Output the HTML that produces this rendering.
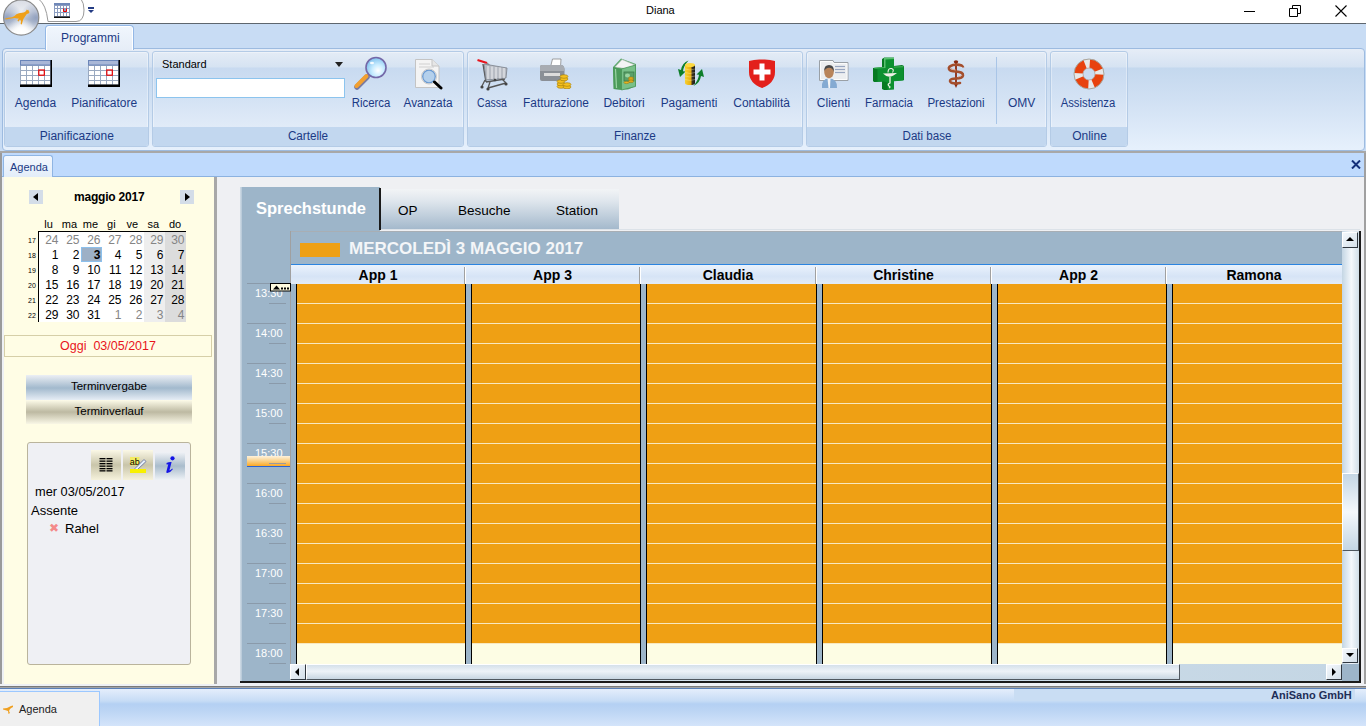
<!DOCTYPE html>
<html><head><meta charset="utf-8">
<style>
*{box-sizing:border-box;margin:0;padding:0}
html,body{width:1366px;height:726px;overflow:hidden;background:#fff;font-family:"Liberation Sans",sans-serif;position:relative}
.a{position:absolute}
.t{position:absolute;white-space:nowrap;line-height:1}
.rl{position:absolute;white-space:nowrap;line-height:1;font-size:12px;color:#1b3a85;top:97px;transform:translateX(-50%)}
.gl{position:absolute;white-space:nowrap;line-height:1;font-size:12px;color:#1b3a85;top:130px;transform:translateX(-50%)}
.grp{position:absolute;top:51px;height:96px;border:1px solid #b4cbe6;border-radius:3px;background:linear-gradient(#e4ecf6,#d6e3f2 15px,#c8daf0 16px,#d3e2f4 45px,#e1ebf8 75px);overflow:hidden;box-shadow:inset 0 0 0 1px rgba(255,255,255,0.35)}
.grp .lb{position:absolute;left:0;right:0;bottom:0;height:19px;background:#c2d7ef}
</style></head><body>
<!-- title bar -->
<div class="a" style="left:0;top:0;width:1366px;height:23px;background:#fff"></div>
<div class="t" style="left:646px;top:5px;font-size:11px;color:#000">Diana</div>
<!-- ribbon -->
<div class="a" style="left:0;top:23px;width:1366px;height:129px;background:#c8dcf4;border-top:1px solid #5e666e"></div>
<div class="a" style="left:2px;top:48px;width:1363px;height:103px;border:1px solid #9dbbe0;border-radius:4px;background:linear-gradient(#e6edf7,#d5e2f2 18px,#c4d8ee 19px,#d0e0f3 50px,#e6f0fc 100px)"></div>
<div class="a" style="left:0;top:151px;width:1366px;height:2px;background:#a8a8a8"></div>
<div class="a" style="left:45px;top:25px;width:89px;height:25px;border:1px solid #94b8e6;border-bottom:none;border-radius:4px 4px 0 0;background:linear-gradient(#f0f6fd,#e6edf7);box-shadow:inset 1px 1px 0 #fff,inset -1px 0 0 #fff"></div>
<div class="t" style="left:61px;top:32px;font-size:12px;color:#1b3a85">Programmi</div>


<div class="grp" style="left:4px;width:145px"><div class="lb"></div></div>
<div class="grp" style="left:152px;width:312px"><div class="lb"></div></div>
<div class="grp" style="left:467px;width:336px"><div class="lb"></div></div>
<div class="grp" style="left:806px;width:241px"><div class="lb"></div></div>
<div class="grp" style="left:1050px;width:78px"><div class="lb"></div></div>
<div class="a" style="left:996px;top:57px;width:1px;height:67px;background:#a9c5e7"></div>

<div class="rl" style="left:35.5px;transform:translateX(-50%) scaleX(1.000)">Agenda</div>
<div class="rl" style="left:104.2px;transform:translateX(-50%) scaleX(1.000)">Pianificatore</div>
<div class="rl" style="left:371.1px;transform:translateX(-50%) scaleX(0.948)">Ricerca</div>
<div class="rl" style="left:428.1px;transform:translateX(-50%) scaleX(0.984)">Avanzata</div>
<div class="rl" style="left:492.4px;transform:translateX(-50%) scaleX(0.876)">Cassa</div>
<div class="rl" style="left:555.8px;transform:translateX(-50%) scaleX(0.988)">Fatturazione</div>
<div class="rl" style="left:624.1px;transform:translateX(-50%) scaleX(1.000)">Debitori</div>
<div class="rl" style="left:689.0px;transform:translateX(-50%) scaleX(0.988)">Pagamenti</div>
<div class="rl" style="left:761.6px;transform:translateX(-50%) scaleX(1.000)">Contabilità</div>
<div class="rl" style="left:833.5px;transform:translateX(-50%) scaleX(1.000)">Clienti</div>
<div class="rl" style="left:888.6px;transform:translateX(-50%) scaleX(0.956)">Farmacia</div>
<div class="rl" style="left:955.5px;transform:translateX(-50%) scaleX(0.963)">Prestazioni</div>
<div class="rl" style="left:1021.7px;transform:translateX(-50%) scaleX(1.000)">OMV</div>
<div class="rl" style="left:1088.1px;transform:translateX(-50%) scaleX(0.941)">Assistenza</div>

<div class="gl" style="left:76.8px;transform:translateX(-50%) scaleX(1.000)">Pianificazione</div>
<div class="gl" style="left:307.8px;transform:translateX(-50%) scaleX(0.973)">Cartelle</div>
<div class="gl" style="left:635.3px;transform:translateX(-50%) scaleX(0.979)">Finanze</div>
<div class="gl" style="left:927.3px;transform:translateX(-50%) scaleX(0.966)">Dati base</div>
<div class="gl" style="left:1089.5px;transform:translateX(-50%) scaleX(1.000)">Online</div>

<div class="t" style="left:162px;top:59px;font-size:11px;color:#000">Standard</div>
<div class="a" style="left:335px;top:62px;width:0;height:0;border-left:4px solid transparent;border-right:4px solid transparent;border-top:5px solid #222"></div>
<div class="a" style="left:156px;top:78px;width:189px;height:20px;background:#fff;border:1px solid #8cc4ee"></div>

<svg class="a" style="left:20px;top:60px" width="32" height="27" viewBox="0 0 32 27">
<rect x="0" y="0" width="31" height="26" fill="#9aa9c0"/>
<rect x="0.5" y="0.5" width="30" height="4.5" fill="#a9b7d7" stroke="#6a85b9"/>
<g fill="#fff">
<rect x="1" y="6" width="5" height="4"/><rect x="7" y="6" width="5" height="4"/><rect x="13" y="6" width="5" height="4"/><rect x="19" y="6" width="5" height="4"/><rect x="25" y="6" width="5" height="4"/>
<rect x="1" y="11" width="5" height="4"/><rect x="7" y="11" width="5" height="4"/><rect x="13" y="11" width="5" height="4"/><rect x="19" y="11" width="5" height="4"/><rect x="25" y="11" width="5" height="4"/>
<rect x="1" y="16" width="5" height="4"/><rect x="7" y="16" width="5" height="4"/><rect x="13" y="16" width="5" height="4"/><rect x="19" y="16" width="5" height="4"/><rect x="25" y="16" width="5" height="4"/>
<rect x="1" y="21" width="5" height="3.5"/><rect x="7" y="21" width="5" height="3.5"/><rect x="13" y="21" width="5" height="3.5"/><rect x="19" y="21" width="5" height="3.5"/><rect x="25" y="21" width="5" height="3.5"/>
</g>
<rect x="18.8" y="10" width="5.5" height="5.2" fill="none" stroke="#e80000" stroke-width="1.2"/>
<rect x="0" y="24.5" width="32" height="2.5" fill="#000"/>
<rect x="30.5" y="0" width="1.5" height="27" fill="#000"/>
</svg><svg class="a" style="left:88px;top:60px" width="32" height="27" viewBox="0 0 32 27">
<rect x="0" y="0" width="31" height="26" fill="#9aa9c0"/>
<rect x="0.5" y="0.5" width="30" height="4.5" fill="#a9b7d7" stroke="#6a85b9"/>
<g fill="#fff">
<rect x="1" y="6" width="5" height="4"/><rect x="7" y="6" width="5" height="4"/><rect x="13" y="6" width="5" height="4"/><rect x="19" y="6" width="5" height="4"/><rect x="25" y="6" width="5" height="4"/>
<rect x="1" y="11" width="5" height="4"/><rect x="7" y="11" width="5" height="4"/><rect x="13" y="11" width="5" height="4"/><rect x="19" y="11" width="5" height="4"/><rect x="25" y="11" width="5" height="4"/>
<rect x="1" y="16" width="5" height="4"/><rect x="7" y="16" width="5" height="4"/><rect x="13" y="16" width="5" height="4"/><rect x="19" y="16" width="5" height="4"/><rect x="25" y="16" width="5" height="4"/>
<rect x="1" y="21" width="5" height="3.5"/><rect x="7" y="21" width="5" height="3.5"/><rect x="13" y="21" width="5" height="3.5"/><rect x="19" y="21" width="5" height="3.5"/><rect x="25" y="21" width="5" height="3.5"/>
</g>
<rect x="18.8" y="10" width="5.5" height="5.2" fill="none" stroke="#e80000" stroke-width="1.2"/>
<rect x="0" y="24.5" width="32" height="2.5" fill="#000"/>
<rect x="30.5" y="0" width="1.5" height="27" fill="#000"/>
</svg>
<!-- magnifier -->
<svg class="a" style="left:353px;top:55px" width="36" height="36" viewBox="0 0 36 36">
<defs><radialGradient id="lens" cx="0.6" cy="0.65" r="0.6"><stop offset="0" stop-color="#ffffff"/><stop offset="0.5" stop-color="#c8ecff"/><stop offset="1" stop-color="#8cc8f0"/></radialGradient></defs>
<line x1="4" y1="32" x2="14" y2="22" stroke="#7a7aa0" stroke-width="5.5" stroke-linecap="round"/>
<line x1="3.5" y1="31" x2="13.5" y2="21" stroke="#f2a030" stroke-width="4" stroke-linecap="round"/>
<circle cx="23" cy="12.5" r="10" fill="url(#lens)" stroke="#7468a8" stroke-width="1.6"/>
<ellipse cx="19" cy="8" rx="2" ry="1.3" fill="#fff" opacity="0.9"/>
</svg>
<!-- doc search -->
<svg class="a" style="left:414px;top:58px" width="30" height="32" viewBox="0 0 30 32">
<path d="M1.5 1.5 H18 L25 8 V29.5 H1.5 Z" fill="#f4f4f4" stroke="#c4c4c4"/>
<path d="M18 1.5 V8 H25" fill="#e6e6e6" stroke="#c4c4c4"/>
<g stroke="#c8c8c8" stroke-width="0.8"><line x1="5" y1="6" x2="16" y2="6"/><line x1="5" y1="9" x2="20" y2="9"/></g>
<circle cx="15" cy="18.5" r="6.3" fill="#b4d0ec" stroke="#6a9ad2" stroke-width="1.3"/>
<circle cx="15" cy="18.5" r="7.5" fill="none" stroke="#c8c8c8" stroke-width="1"/>
<line x1="20.5" y1="24" x2="27" y2="30" stroke="#000" stroke-width="3" stroke-linecap="round"/>
</svg>
<!-- cart -->
<svg class="a" style="left:476px;top:58px" width="32" height="33" viewBox="0 0 32 33">
<line x1="1.5" y1="2" x2="11" y2="5" stroke="#e8141c" stroke-width="2.2"/>
<path d="M11 5 L14 8" stroke="#888" stroke-width="1.2"/>
<path d="M7 6 L10 24 M10 24 L29 21" fill="none" stroke="#555" stroke-width="1.4"/>
<path d="M8 6 L31 10 L30 20 L10 22 Z" fill="#b8bcc4" stroke="#7a7f88" stroke-width="0.8"/>
<g stroke="#e6e8ec" stroke-width="1.2"><line x1="12" y1="8" x2="12" y2="21"/><line x1="16" y1="8.5" x2="16" y2="21"/><line x1="20" y1="9" x2="20" y2="21"/><line x1="24" y1="9.5" x2="24" y2="20.5"/><line x1="28" y1="10" x2="28" y2="20"/></g>
<path d="M9 22 L6 28 M14 24 L12 30 M26 21 L30 25 M12 30 L30 25" fill="none" stroke="#555" stroke-width="1.3"/>
<circle cx="6" cy="29" r="1.6" fill="#444"/><circle cx="12" cy="31" r="1.6" fill="#444"/><circle cx="30" cy="26" r="1.6" fill="#444"/><circle cx="19" cy="22" r="1.3" fill="#444"/>
</svg>
<!-- printer -->
<svg class="a" style="left:539px;top:58px" width="33" height="31" viewBox="0 0 33 31">
<path d="M11.5 9 L13.5 1 H22 L21.5 9 Z" fill="#fff" stroke="#888" stroke-width="0.8"/>
<path d="M1 9 Q1 7 3 7 H22 Q25 7 25.5 11 V21 Q25 23 22 23 H3 Q1 23 1 21 Z" fill="#8a8f96"/>
<path d="M1 9 Q1 7 3 7 H22 Q25 7 25.5 11 V13 H1 Z" fill="#a8acb2"/>
<rect x="5" y="15" width="16" height="3" fill="#dcdcdc"/>
<g fill="#f4c020" stroke="#a07808" stroke-width="0.6">
<ellipse cx="22" cy="28.5" rx="4" ry="1.8"/><ellipse cx="22" cy="26" rx="4" ry="1.8"/><ellipse cx="22" cy="23.5" rx="4" ry="1.8"/>
<ellipse cx="28" cy="29" rx="4" ry="1.8"/><ellipse cx="28" cy="26.5" rx="4" ry="1.8"/>
<ellipse cx="25" cy="21" rx="4" ry="1.8"/><ellipse cx="25" cy="18.5" rx="4" ry="1.8"/>
</g>
</svg>
<!-- book -->
<svg class="a" style="left:612px;top:57px" width="26" height="34" viewBox="0 0 26 34">
<path d="M1 10 L9 1.5 L24 7 L24 29 L16 32.5 L2 32 Z" fill="#5aa86a"/>
<path d="M3 10 L10 2.5 L23 8 L16 12 Z" fill="#f4f4f4" stroke="#b8c0b8" stroke-width="0.6"/>
<path d="M9.5 12 L23.5 8 V29.5 L9.5 33 Z" fill="#78c088" stroke="#4a9458" stroke-width="0.8"/>
<path d="M1 10 L9.5 12 V33 L1.5 32 Z" fill="#4a9a5a"/>
<path d="M3.5 12 L4.5 31" stroke="#9ad4a4" stroke-width="1.2"/>
<rect x="12" y="15" width="10" height="9" fill="#5aa06a" stroke="#3c7a48" stroke-width="0.8"/>
<ellipse cx="15.5" cy="18.5" rx="2.5" ry="2" fill="#9ad4a0"/>
<g fill="#e8b420" stroke="#9a7008" stroke-width="0.5"><ellipse cx="19" cy="24.5" rx="2.6" ry="1.1"/><ellipse cx="19" cy="22.8" rx="2.6" ry="1.1"/><ellipse cx="19" cy="21.1" rx="2.6" ry="1.1"/><ellipse cx="14.5" cy="25.5" rx="2.6" ry="1.1"/></g>
</svg>
<!-- pagamenti -->
<svg class="a" style="left:676px;top:60px" width="30" height="27" viewBox="0 0 30 27">
<defs><linearGradient id="pg" x1="0" x2="1"><stop offset="0" stop-color="#f8d030"/><stop offset="0.55" stop-color="#e8b010"/><stop offset="0.75" stop-color="#3a3020"/><stop offset="1" stop-color="#1a1a1a"/></linearGradient></defs>
<path d="M12.5 0.5 Q6 3 5 10 L2 9 L4 17 L9.5 11.5 L7 11.2 Q7.5 6 12.5 0.5 Z" fill="#0e7e2a"/>
<path d="M17.5 26 Q24 23 25 16 L28 17 L26 9 L20.5 14.5 L23 14.8 Q22.5 20 17.5 26 Z" fill="#0e7e2a"/>
<rect x="9" y="5" width="10" height="18" fill="url(#pg)"/>
<ellipse cx="14" cy="5" rx="5" ry="2" fill="#fcd840"/>
<ellipse cx="14" cy="23" rx="5" ry="2" fill="url(#pg)"/>
<g stroke="#fff4b0" stroke-width="0.5" opacity="0.7" fill="none"><path d="M9 9 Q14 11 19 9"/><path d="M9 12.5 Q14 14.5 19 12.5"/><path d="M9 16 Q14 18 19 16"/><path d="M9 19.5 Q14 21.5 19 19.5"/></g>
</svg>
<!-- shield -->
<svg class="a" style="left:748px;top:59px" width="28" height="30" viewBox="0 0 28 30">
<path d="M1 2 Q7 0 14 0.5 Q21 0 27 2 V13 Q27 24 14 29 Q1 24 1 13 Z" fill="#e3201b"/>
<path d="M11.5 4.5 H16.5 V10.5 H22.5 V15.5 H16.5 V21.5 H11.5 V15.5 H5.5 V10.5 H11.5 Z" fill="#fff"/>
</svg>
<!-- clienti -->
<svg class="a" style="left:818px;top:59px" width="32" height="31" viewBox="0 0 32 31">
<path d="M1.5 1.5 H15 L16 3.5 H30 V21.5 H1.5 Z" fill="#eceef0" stroke="#9aa0a6" stroke-width="1"/>
<path d="M2.5 2.5 H14.5 L15.5 4.5 H29 V20.5 H2.5 Z" fill="none" stroke="#fff" stroke-width="0.8"/>
<g stroke="#98a6c0" stroke-width="1.2"><line x1="17" y1="7.5" x2="27" y2="7.5"/><line x1="17" y1="10.5" x2="27" y2="10.5"/><line x1="17" y1="13.5" x2="27" y2="13.5"/></g>
<path d="M4 29 Q3 19.5 11 19.5 Q19.5 19.5 19 29 Z" fill="#84aad2"/>
<path d="M9.5 19.5 L10.5 29 L12 29 L12.5 19.5 Z" fill="#f4f4f4"/>
<ellipse cx="11" cy="13" rx="4.8" ry="6.2" fill="#b8845a"/>
<path d="M6.2 12 Q6 6 11 6 Q16.5 6 15.8 13 Q14.5 8.5 11 8.8 Q7.5 9 6.2 12 Z" fill="#4a4a4a"/>
</svg>
<!-- farmacia -->
<svg class="a" style="left:872px;top:57px" width="34" height="34" viewBox="0 0 34 34">
<path d="M10 2 L12 0.8 H22 L22 9 L30 8 L32 9 V23 L22 24 V32 L12 33 L10 32 V24.5 L2 25 L1 24 V11 L10 10 Z" fill="#067a22"/>
<path d="M12 0.8 H22 V9.5 L31.5 9 V23.5 L22 24.2 V32.5 L12 33 V24.5 L2 25 V11 L12 10.5 Z" fill="#0c9030"/>
<path d="M12 0.8 L22 0.8 L22 2 L13.5 2.5 V11 L2 11.5 V10.8 L12 10.3 Z" fill="#5ac070"/>
<path d="M22 9.5 L31.5 9 L31.5 10.2 L22 10.8 Z" fill="#3aa850"/>
<path d="M2 11.5 L5.5 12.5 V24.6 L2 25 Z" fill="#067a22"/>
<path d="M12 24.5 L15.5 25.5 V33 L12 33 Z" fill="#067a22"/>
<path d="M11 16.5 Q17 23 25 16 Z" fill="#f0f0e8"/>
<path d="M18 20 V26 Q15 27 17 29 Q19 30 17 31" fill="none" stroke="#f0f0e8" stroke-width="1.3"/>
<path d="M16 15.5 Q16 11 19.5 11.5 Q22.5 12.5 20.5 15.5" fill="none" stroke="#f0f0e8" stroke-width="1.1"/>
</svg>
<!-- caduceus -->
<svg class="a" style="left:946px;top:59px" width="20" height="31" viewBox="0 0 20 31">
<ellipse cx="10" cy="2.8" rx="2.2" ry="1.6" fill="#8a2a10"/>
<line x1="10" y1="3" x2="10" y2="26" stroke="#8a2a10" stroke-width="1.8"/>
<path d="M10 29 L8.2 25 H11.8 Z" fill="#8a2a10"/>
<path d="M15.5 6.5 Q12 5 7 6 Q2 7.5 3 10 Q4 12.5 10 12.5 Q17.5 13 17 16.5 Q16.5 19.5 10 19.5 Q4 19.5 4 22 Q4.5 24.5 10 24.5 L14 24" fill="none" stroke="#a44e2c" stroke-width="2.6" stroke-linecap="round"/>
<path d="M15.5 6.5 Q17 7 17.5 8.5" fill="none" stroke="#a44e2c" stroke-width="2"/>
<path d="M5 9 Q6 11 10 11" fill="none" stroke="#e0a080" stroke-width="0.8"/>
<path d="M12 18 Q15 17.5 15.5 16" fill="none" stroke="#e0a080" stroke-width="0.8"/>
</svg>
<!-- lifebuoy -->
<svg class="a" style="left:1073px;top:58px" width="32" height="32" viewBox="0 0 32 32">
<circle cx="16" cy="16" r="10.5" fill="none" stroke="#e8420e" stroke-width="9"/>
<circle cx="16" cy="16" r="10.5" fill="none" stroke="#e8e8e8" stroke-width="9" stroke-dasharray="4.8 11.69" stroke-dashoffset="4.3"/>
<circle cx="16" cy="16" r="15" fill="none" stroke="#a8a8a0" stroke-width="1"/>
<circle cx="16" cy="16" r="6" fill="none" stroke="#b0b0b0" stroke-width="0.8"/>
</svg>
<!-- orb -->
<svg class="a" style="left:0;top:-3px" width="44" height="42" viewBox="0 0 44 42">
<defs>
<linearGradient id="orbl" x1="0" y1="0" x2="0" y2="1"><stop offset="0" stop-color="#d8dce4"/><stop offset="0.35" stop-color="#eceef2"/><stop offset="0.55" stop-color="#c4ccd8"/><stop offset="0.8" stop-color="#f4f6f8"/><stop offset="1" stop-color="#ffffff"/></linearGradient>
<radialGradient id="orbr" cx="0.5" cy="0.6" r="0.5"><stop offset="0" stop-color="#ffffff" stop-opacity="0.9"/><stop offset="0.6" stop-color="#ffffff" stop-opacity="0.3"/><stop offset="1" stop-color="#8898b8" stop-opacity="0.35"/></radialGradient>
</defs>
<circle cx="21.2" cy="20.5" r="17.6" fill="url(#orbl)"/>
<defs>
<radialGradient id="orbL" cx="0.08" cy="0.5" r="0.45"><stop offset="0" stop-color="#8c9cbc" stop-opacity="0.9"/><stop offset="1" stop-color="#8c9cbc" stop-opacity="0"/></radialGradient>
<radialGradient id="orbR" cx="0.92" cy="0.5" r="0.45"><stop offset="0" stop-color="#8c9cbc" stop-opacity="0.9"/><stop offset="1" stop-color="#8c9cbc" stop-opacity="0"/></radialGradient>
<radialGradient id="orbB" cx="0.5" cy="0.9" r="0.4"><stop offset="0" stop-color="#fff" stop-opacity="1"/><stop offset="1" stop-color="#fff" stop-opacity="0"/></radialGradient>
</defs>
<circle cx="21.2" cy="20.5" r="17.6" fill="url(#orbL)"/>
<circle cx="21.2" cy="20.5" r="17.6" fill="url(#orbR)"/>
<circle cx="21.2" cy="20.5" r="17.6" fill="url(#orbB)" stroke="#8a8a8a" stroke-width="1.2"/>
<path d="M5 21.6 L8.5 20.8 L12 20.3 L14.5 19 Q16 16.8 19 16.3 L23.5 15.6 Q25 15 26 14 L26.8 12.6 L27.6 13.2 L28.4 12.8 L28.8 14.2 L29.6 15 L28.6 16.4 L26.8 17 L25.6 18.8 L24.4 20.6 L23.4 22 L22.6 24.6 L21.8 27.4 L20.6 27 L21 24 L20 22.6 L18.6 24.4 L17.4 23.8 L18.8 21.6 L17 21.6 L14.5 21 L10 21.8 L5.5 22.4 Z" fill="#f0a018"/>
</svg>
<!-- QAT -->
<svg class="a" style="left:38px;top:0" width="50" height="23" viewBox="0 0 50 23">
<path d="M0.5 -1 Q8 4 10 21.5 H38 Q46 21.5 46 10 Q46 3 43 -1" fill="#fff" stroke="#9a9a9a" stroke-width="1"/>
</svg>
<svg class="a" style="left:54px;top:3px" width="16" height="15" viewBox="0 0 16 15">
<rect x="0" y="0" width="16" height="15" fill="#8a9cc0"/>
<rect x="0" y="0" width="16" height="2" fill="#7088b8"/>
<g fill="#fff"><rect x="1" y="3" width="2" height="2"/><rect x="4" y="3" width="2" height="2"/><rect x="7" y="3" width="2" height="2"/><rect x="10" y="3" width="2" height="2"/><rect x="13" y="3" width="2" height="2"/>
<rect x="1" y="6" width="2" height="3"/><rect x="4" y="6" width="2" height="3"/><rect x="7" y="6" width="2" height="3"/><rect x="13" y="6" width="2" height="3"/>
<rect x="1" y="10" width="2" height="3"/><rect x="4" y="10" width="2" height="3"/><rect x="7" y="10" width="2" height="3"/><rect x="10" y="10" width="2" height="3"/><rect x="13" y="10" width="2" height="3"/></g>
<path d="M9.5 5.5 V8.5 H12.5 V5.5" fill="none" stroke="#e00" stroke-width="1"/>
<rect x="0" y="13.5" width="16" height="1.5" fill="#111"/>
</svg>
<div class="a" style="left:88px;top:7px;width:6px;height:1.5px;background:#243c84"></div>
<div class="a" style="left:88px;top:10px;width:0;height:0;border-left:3px solid transparent;border-right:3px solid transparent;border-top:3.5px solid #243c84"></div>
<!-- window controls -->
<div class="a" style="left:1244px;top:11px;width:11px;height:1px;background:#000"></div>
<svg class="a" style="left:1289px;top:5px" width="12" height="12" viewBox="0 0 12 12"><path d="M0.5 3.5 H8.5 V11.5 H0.5 Z M3.5 3.5 V0.5 H11.5 V8.5 H8.5" fill="none" stroke="#000" stroke-width="1"/></svg>
<svg class="a" style="left:1335px;top:5px" width="12" height="12" viewBox="0 0 12 12"><path d="M0.5 0.5 L11.5 11.5 M11.5 0.5 L0.5 11.5" stroke="#000" stroke-width="1.1"/></svg>

<!-- doc tab strip -->
<div class="a" style="left:0;top:153px;width:1366px;height:24px;background:#bfdafd;border-bottom:1px solid #8cb2e0"></div>
<div class="a" style="left:3px;top:155px;width:50px;height:22px;border:1px solid #8fb5e3;border-bottom:none;border-radius:3px 3px 0 0;background:linear-gradient(#f3f8fe,#e3edf9)"></div>
<div class="t" style="left:10px;top:162px;font-size:11px;color:#1b3a85">Agenda</div>

<!-- left panel -->
<div class="a" style="left:0;top:177px;width:215px;height:509px;background:#fffde5"></div>
<div class="a" style="left:215px;top:177px;width:1151px;height:509px;background:#eff0f3"></div>

<!-- left panel content -->
<div class="a" style="left:0;top:153px;width:2px;height:533px;background:#9a9a9a"></div><div class="a" style="left:2px;top:177px;width:2px;height:507px;background:#eef0f4"></div>
<div class="a" style="left:214px;top:177px;width:3px;height:509px;background:#a8a8a8"></div>
<div class="a" style="left:29px;top:190px;width:14px;height:14px;background:#d4dde8"></div>
<div class="a" style="left:33px;top:193px;width:0;height:0;border-top:4px solid transparent;border-bottom:4px solid transparent;border-right:5px solid #000"></div>
<div class="a" style="left:180px;top:190px;width:14px;height:14px;background:#d4dde8"></div>
<div class="a" style="left:185px;top:193px;width:0;height:0;border-top:4px solid transparent;border-bottom:4px solid transparent;border-left:5px solid #000"></div>
<div class="t" style="left:74px;top:191px;font-size:12px;font-weight:bold;color:#000;letter-spacing:-0.2px">maggio 2017</div>
<div class="t" style="left:38.6px;width:20px;text-align:center;top:219px;font-size:11px;color:#000">lu</div>
<div class="t" style="left:59.4px;width:20px;text-align:center;top:219px;font-size:11px;color:#000">ma</div>
<div class="t" style="left:80.5px;width:20px;text-align:center;top:219px;font-size:11px;color:#000">me</div>
<div class="t" style="left:101.3px;width:20px;text-align:center;top:219px;font-size:11px;color:#000">gi</div>
<div class="t" style="left:122.4px;width:20px;text-align:center;top:219px;font-size:11px;color:#000">ve</div>
<div class="t" style="left:143.3px;width:20px;text-align:center;top:219px;font-size:11px;color:#000">sa</div>
<div class="t" style="left:165.0px;width:20px;text-align:center;top:219px;font-size:11px;color:#000">do</div>
<div class="a" style="left:39px;top:232px;width:105px;height:90px;background:#fff"></div>
<div class="a" style="left:144px;top:232px;width:21px;height:90px;background:#eeeeee"></div>
<div class="a" style="left:165px;top:232px;width:21px;height:90px;background:#dcdcdc"></div>
<div class="a" style="left:38px;top:231px;width:148px;height:1px;background:#000"></div>
<div class="a" style="left:38px;top:231px;width:1px;height:91px;background:#000"></div>
<div class="t" style="left:28px;top:237px;font-size:7px;color:#000">17</div>
<div class="t" style="left:38.5px;width:20px;text-align:right;top:234px;font-size:12px;color:#858585">24</div>
<div class="t" style="left:59.5px;width:20px;text-align:right;top:234px;font-size:12px;color:#858585">25</div>
<div class="t" style="left:80.5px;width:20px;text-align:right;top:234px;font-size:12px;color:#858585">26</div>
<div class="t" style="left:101.5px;width:20px;text-align:right;top:234px;font-size:12px;color:#858585">27</div>
<div class="t" style="left:122.5px;width:20px;text-align:right;top:234px;font-size:12px;color:#858585">28</div>
<div class="t" style="left:143.5px;width:20px;text-align:right;top:234px;font-size:12px;color:#858585">29</div>
<div class="t" style="left:164.5px;width:20px;text-align:right;top:234px;font-size:12px;color:#858585">30</div>
<div class="t" style="left:28px;top:252px;font-size:7px;color:#000">18</div>
<div class="t" style="left:38.5px;width:20px;text-align:right;top:249px;font-size:12px;color:#000">1</div>
<div class="t" style="left:59.5px;width:20px;text-align:right;top:249px;font-size:12px;color:#000">2</div>
<div class="a" style="left:81px;top:247px;width:21px;height:15px;background:#9db0c6;border:1px solid #8cc0ec"></div>
<div class="t" style="left:80.5px;width:20px;text-align:right;top:249px;font-size:12px;font-weight:bold;color:#000">3</div>
<div class="t" style="left:101.5px;width:20px;text-align:right;top:249px;font-size:12px;color:#000">4</div>
<div class="t" style="left:122.5px;width:20px;text-align:right;top:249px;font-size:12px;color:#000">5</div>
<div class="t" style="left:143.5px;width:20px;text-align:right;top:249px;font-size:12px;color:#000">6</div>
<div class="t" style="left:164.5px;width:20px;text-align:right;top:249px;font-size:12px;color:#000">7</div>
<div class="t" style="left:28px;top:267px;font-size:7px;color:#000">19</div>
<div class="t" style="left:38.5px;width:20px;text-align:right;top:264px;font-size:12px;color:#000">8</div>
<div class="t" style="left:59.5px;width:20px;text-align:right;top:264px;font-size:12px;color:#000">9</div>
<div class="t" style="left:80.5px;width:20px;text-align:right;top:264px;font-size:12px;color:#000">10</div>
<div class="t" style="left:101.5px;width:20px;text-align:right;top:264px;font-size:12px;color:#000">11</div>
<div class="t" style="left:122.5px;width:20px;text-align:right;top:264px;font-size:12px;color:#000">12</div>
<div class="t" style="left:143.5px;width:20px;text-align:right;top:264px;font-size:12px;color:#000">13</div>
<div class="t" style="left:164.5px;width:20px;text-align:right;top:264px;font-size:12px;color:#000">14</div>
<div class="t" style="left:28px;top:282px;font-size:7px;color:#000">20</div>
<div class="t" style="left:38.5px;width:20px;text-align:right;top:279px;font-size:12px;color:#000">15</div>
<div class="t" style="left:59.5px;width:20px;text-align:right;top:279px;font-size:12px;color:#000">16</div>
<div class="t" style="left:80.5px;width:20px;text-align:right;top:279px;font-size:12px;color:#000">17</div>
<div class="t" style="left:101.5px;width:20px;text-align:right;top:279px;font-size:12px;color:#000">18</div>
<div class="t" style="left:122.5px;width:20px;text-align:right;top:279px;font-size:12px;color:#000">19</div>
<div class="t" style="left:143.5px;width:20px;text-align:right;top:279px;font-size:12px;color:#000">20</div>
<div class="t" style="left:164.5px;width:20px;text-align:right;top:279px;font-size:12px;color:#000">21</div>
<div class="t" style="left:28px;top:297px;font-size:7px;color:#000">21</div>
<div class="t" style="left:38.5px;width:20px;text-align:right;top:294px;font-size:12px;color:#000">22</div>
<div class="t" style="left:59.5px;width:20px;text-align:right;top:294px;font-size:12px;color:#000">23</div>
<div class="t" style="left:80.5px;width:20px;text-align:right;top:294px;font-size:12px;color:#000">24</div>
<div class="t" style="left:101.5px;width:20px;text-align:right;top:294px;font-size:12px;color:#000">25</div>
<div class="t" style="left:122.5px;width:20px;text-align:right;top:294px;font-size:12px;color:#000">26</div>
<div class="t" style="left:143.5px;width:20px;text-align:right;top:294px;font-size:12px;color:#000">27</div>
<div class="t" style="left:164.5px;width:20px;text-align:right;top:294px;font-size:12px;color:#000">28</div>
<div class="t" style="left:28px;top:312px;font-size:7px;color:#000">22</div>
<div class="t" style="left:38.5px;width:20px;text-align:right;top:309px;font-size:12px;color:#000">29</div>
<div class="t" style="left:59.5px;width:20px;text-align:right;top:309px;font-size:12px;color:#000">30</div>
<div class="t" style="left:80.5px;width:20px;text-align:right;top:309px;font-size:12px;color:#000">31</div>
<div class="t" style="left:101.5px;width:20px;text-align:right;top:309px;font-size:12px;color:#858585">1</div>
<div class="t" style="left:122.5px;width:20px;text-align:right;top:309px;font-size:12px;color:#858585">2</div>
<div class="t" style="left:143.5px;width:20px;text-align:right;top:309px;font-size:12px;color:#858585">3</div>
<div class="t" style="left:164.5px;width:20px;text-align:right;top:309px;font-size:12px;color:#858585">4</div>
<div class="a" style="left:4px;top:335px;width:208px;height:22px;border:1px solid #d6cfa8;background:#fffde5"></div>
<div class="t" style="left:4px;width:208px;text-align:center;top:340px;font-size:12.5px;color:#e8141c">Oggi&nbsp; 03/05/2017</div>
<div class="a" style="left:26px;top:375px;width:166px;height:25px;background:linear-gradient(#eceff4,#a2b9cd 52%,#e6edf5)"></div>
<div class="t" style="left:26px;width:166px;text-align:center;top:381px;font-size:11.5px;color:#000">Terminvergabe</div>
<div class="a" style="left:26px;top:400px;width:166px;height:24px;background:linear-gradient(#fdfbe9,#bdb9a2 50%,#f9f7e6)"></div>
<div class="t" style="left:26px;width:166px;text-align:center;top:406px;font-size:11.5px;color:#000">Terminverlauf</div>
<div class="a" style="left:27px;top:442px;width:164px;height:223px;border:1px solid #bab49c;border-radius:3px;background:#eff0f4"></div>
<div class="a" style="left:91px;top:450px;width:30px;height:30px;background:linear-gradient(#fbf8e6,#c9c5aa 50%,#f6f2dc)"></div>
<div class="a" style="left:123px;top:450px;width:30px;height:30px;background:linear-gradient(#fbf8e6,#c9c5aa 50%,#f6f2dc)"></div>
<div class="a" style="left:155px;top:452px;width:30px;height:28px;background:linear-gradient(#f0f2f6,#a9bccc 50%,#eef2f6)"></div>
<svg class="a" style="left:99px;top:457px" width="15" height="15" viewBox="0 0 15 15"><g fill="#000"><rect x="0.5" y="1" width="6" height="1.3"/><rect x="7.5" y="1" width="6" height="1.3"/><rect x="0.5" y="3.5" width="6" height="1.3"/><rect x="7.5" y="3.5" width="6" height="1.3"/><rect x="0.5" y="6" width="6" height="1.3"/><rect x="7.5" y="6" width="6" height="1.3"/><rect x="0.5" y="8.5" width="6" height="1.3"/><rect x="7.5" y="8.5" width="6" height="1.3"/><rect x="0.5" y="11" width="6" height="1.3"/><rect x="7.5" y="11" width="6" height="1.3"/><rect x="0.5" y="13.2" width="6" height="1.3"/><rect x="7.5" y="13.2" width="6" height="1.3"/></g></svg>
<svg class="a" style="left:129px;top:456px" width="19" height="18" viewBox="0 0 19 18"><rect x="1" y="1" width="9.5" height="8.5" fill="#f4ec60"/><text x="0.8" y="8.5" font-family="Liberation Sans" font-size="9" fill="#000">ab</text><path d="M6 12.5 L15 3.5 L17 5.5 L8 14 L5.5 14.5 Z" fill="#e8f0fa" stroke="#5a6a9a" stroke-width="0.8"/><rect x="1" y="13" width="16" height="4" fill="#f8f000"/></svg>
<svg class="a" style="left:163px;top:456px" width="14" height="18" viewBox="0 0 14 18"><circle cx="9.5" cy="2.3" r="2.1" fill="#1414e6"/><path d="M3.5 7 Q6 5.8 8.6 6 L6.4 14.6 Q8 14 9.2 12.6 L9.8 13.2 Q7.5 16.6 4.2 17 Q3 17 3.4 15.4 L5.3 8.2 Q4.2 8.5 3.6 8.6 Z" fill="#1414e6"/></svg>
<div class="t" style="left:35px;top:486px;font-size:12.8px;color:#000">mer 03/05/2017</div>
<div class="t" style="left:31px;top:504px;font-size:13px;color:#000">Assente</div>
<div class="t" style="left:49px;top:522px;font-size:12px;color:#f48a8a">&#10006;</div>
<div class="t" style="left:65px;top:522px;font-size:13px;color:#000">Rahel</div>


<!-- scheduler -->
<div class="a" style="left:240px;top:187px;width:140px;height:494px;background:#9db5c9;border-left:1px solid #c4d4e2"></div>
<div class="a" style="left:380px;top:189px;width:239px;height:40px;background:linear-gradient(#f2f4f6,#dfe6ed 30%,#a4b9cc)"></div><div class="a" style="left:380px;top:229px;width:980px;height:1px;background:#dce2e8"></div>
<div class="a" style="left:379px;top:188px;width:2px;height:42px;background:#1a1a1a"></div>
<div class="t" style="left:256px;top:200px;font-size:16.5px;font-weight:bold;color:#fff">Sprechstunde</div>
<div class="t" style="left:398px;top:204px;font-size:13.5px;color:#000">OP</div>
<div class="t" style="left:458px;top:204px;font-size:13.5px;color:#000">Besuche</div>
<div class="t" style="left:556px;top:204px;font-size:13.5px;color:#000">Station</div>
<div class="a" style="left:240px;top:231px;width:1102px;height:450px;background:#9db5c9"></div><div class="a" style="left:240px;top:187px;width:2px;height:494px;background:linear-gradient(90deg,#d2dde7,#b4c6d6)"></div>
<div class="a" style="left:291px;top:231px;width:1051px;height:1px;background:#a8aeb4"></div><div class="a" style="left:291px;top:232px;width:1051px;height:1px;background:#c0ccd6"></div>
<div class="a" style="left:291px;top:232px;width:1051px;height:32px;background:#9db5c9"></div>
<div class="a" style="left:300px;top:243px;width:40px;height:14px;background:#efa014"></div>
<div class="t" style="left:349px;top:240px;font-size:17px;font-weight:bold;color:#f4f6f8">MERCOLEDÌ 3 MAGGIO 2017</div>
<div class="a" style="left:291px;top:264px;width:1051px;height:1px;background:#2a84e0"></div>
<div class="a" style="left:291px;top:265px;width:1051px;height:19px;background:linear-gradient(#eaf2fc,#d6e4f6 60%,#e2ecf8)"></div>
<div class="a" style="left:290px;top:231px;width:1px;height:433px;background:#a0a0a0"></div>
<div class="a" style="left:297px;top:284px;width:168px;height:380px;background:#fdfde4;overflow:hidden"><div style="position:absolute;left:0;right:0;top:0;height:359px;background:#efa014"></div><div style="position:absolute;left:0;right:0;top:19px;height:1px;background:#f8e8c0"></div><div style="position:absolute;left:0;right:0;top:39px;height:1px;background:#f8e8c0"></div><div style="position:absolute;left:0;right:0;top:59px;height:1px;background:#f8e8c0"></div><div style="position:absolute;left:0;right:0;top:79px;height:1px;background:#f8e8c0"></div><div style="position:absolute;left:0;right:0;top:99px;height:1px;background:#f8e8c0"></div><div style="position:absolute;left:0;right:0;top:119px;height:1px;background:#f8e8c0"></div><div style="position:absolute;left:0;right:0;top:139px;height:1px;background:#f8e8c0"></div><div style="position:absolute;left:0;right:0;top:159px;height:1px;background:#f8e8c0"></div><div style="position:absolute;left:0;right:0;top:179px;height:1px;background:#f8e8c0"></div><div style="position:absolute;left:0;right:0;top:199px;height:1px;background:#f8e8c0"></div><div style="position:absolute;left:0;right:0;top:219px;height:1px;background:#f8e8c0"></div><div style="position:absolute;left:0;right:0;top:239px;height:1px;background:#f8e8c0"></div><div style="position:absolute;left:0;right:0;top:259px;height:1px;background:#f8e8c0"></div><div style="position:absolute;left:0;right:0;top:279px;height:1px;background:#f8e8c0"></div><div style="position:absolute;left:0;right:0;top:299px;height:1px;background:#f8e8c0"></div><div style="position:absolute;left:0;right:0;top:319px;height:1px;background:#f8e8c0"></div><div style="position:absolute;left:0;right:0;top:339px;height:1px;background:#f8e8c0"></div><div style="position:absolute;left:0;right:0;top:359px;height:1px;background:#f8e8c0"></div></div>
<div class="t" style="left:291px;width:174px;text-align:center;top:268px;font-size:14px;font-weight:bold;color:#000">App 1</div>
<div class="a" style="left:472px;top:284px;width:168px;height:380px;background:#fdfde4;overflow:hidden"><div style="position:absolute;left:0;right:0;top:0;height:359px;background:#efa014"></div><div style="position:absolute;left:0;right:0;top:19px;height:1px;background:#f8e8c0"></div><div style="position:absolute;left:0;right:0;top:39px;height:1px;background:#f8e8c0"></div><div style="position:absolute;left:0;right:0;top:59px;height:1px;background:#f8e8c0"></div><div style="position:absolute;left:0;right:0;top:79px;height:1px;background:#f8e8c0"></div><div style="position:absolute;left:0;right:0;top:99px;height:1px;background:#f8e8c0"></div><div style="position:absolute;left:0;right:0;top:119px;height:1px;background:#f8e8c0"></div><div style="position:absolute;left:0;right:0;top:139px;height:1px;background:#f8e8c0"></div><div style="position:absolute;left:0;right:0;top:159px;height:1px;background:#f8e8c0"></div><div style="position:absolute;left:0;right:0;top:179px;height:1px;background:#f8e8c0"></div><div style="position:absolute;left:0;right:0;top:199px;height:1px;background:#f8e8c0"></div><div style="position:absolute;left:0;right:0;top:219px;height:1px;background:#f8e8c0"></div><div style="position:absolute;left:0;right:0;top:239px;height:1px;background:#f8e8c0"></div><div style="position:absolute;left:0;right:0;top:259px;height:1px;background:#f8e8c0"></div><div style="position:absolute;left:0;right:0;top:279px;height:1px;background:#f8e8c0"></div><div style="position:absolute;left:0;right:0;top:299px;height:1px;background:#f8e8c0"></div><div style="position:absolute;left:0;right:0;top:319px;height:1px;background:#f8e8c0"></div><div style="position:absolute;left:0;right:0;top:339px;height:1px;background:#f8e8c0"></div><div style="position:absolute;left:0;right:0;top:359px;height:1px;background:#f8e8c0"></div></div>
<div class="t" style="left:465px;width:175px;text-align:center;top:268px;font-size:14px;font-weight:bold;color:#000">App 3</div>
<div class="a" style="left:647px;top:284px;width:169px;height:380px;background:#fdfde4;overflow:hidden"><div style="position:absolute;left:0;right:0;top:0;height:359px;background:#efa014"></div><div style="position:absolute;left:0;right:0;top:19px;height:1px;background:#f8e8c0"></div><div style="position:absolute;left:0;right:0;top:39px;height:1px;background:#f8e8c0"></div><div style="position:absolute;left:0;right:0;top:59px;height:1px;background:#f8e8c0"></div><div style="position:absolute;left:0;right:0;top:79px;height:1px;background:#f8e8c0"></div><div style="position:absolute;left:0;right:0;top:99px;height:1px;background:#f8e8c0"></div><div style="position:absolute;left:0;right:0;top:119px;height:1px;background:#f8e8c0"></div><div style="position:absolute;left:0;right:0;top:139px;height:1px;background:#f8e8c0"></div><div style="position:absolute;left:0;right:0;top:159px;height:1px;background:#f8e8c0"></div><div style="position:absolute;left:0;right:0;top:179px;height:1px;background:#f8e8c0"></div><div style="position:absolute;left:0;right:0;top:199px;height:1px;background:#f8e8c0"></div><div style="position:absolute;left:0;right:0;top:219px;height:1px;background:#f8e8c0"></div><div style="position:absolute;left:0;right:0;top:239px;height:1px;background:#f8e8c0"></div><div style="position:absolute;left:0;right:0;top:259px;height:1px;background:#f8e8c0"></div><div style="position:absolute;left:0;right:0;top:279px;height:1px;background:#f8e8c0"></div><div style="position:absolute;left:0;right:0;top:299px;height:1px;background:#f8e8c0"></div><div style="position:absolute;left:0;right:0;top:319px;height:1px;background:#f8e8c0"></div><div style="position:absolute;left:0;right:0;top:339px;height:1px;background:#f8e8c0"></div><div style="position:absolute;left:0;right:0;top:359px;height:1px;background:#f8e8c0"></div></div>
<div class="t" style="left:640px;width:176px;text-align:center;top:268px;font-size:14px;font-weight:bold;color:#000">Claudia</div>
<div class="a" style="left:823px;top:284px;width:168px;height:380px;background:#fdfde4;overflow:hidden"><div style="position:absolute;left:0;right:0;top:0;height:359px;background:#efa014"></div><div style="position:absolute;left:0;right:0;top:19px;height:1px;background:#f8e8c0"></div><div style="position:absolute;left:0;right:0;top:39px;height:1px;background:#f8e8c0"></div><div style="position:absolute;left:0;right:0;top:59px;height:1px;background:#f8e8c0"></div><div style="position:absolute;left:0;right:0;top:79px;height:1px;background:#f8e8c0"></div><div style="position:absolute;left:0;right:0;top:99px;height:1px;background:#f8e8c0"></div><div style="position:absolute;left:0;right:0;top:119px;height:1px;background:#f8e8c0"></div><div style="position:absolute;left:0;right:0;top:139px;height:1px;background:#f8e8c0"></div><div style="position:absolute;left:0;right:0;top:159px;height:1px;background:#f8e8c0"></div><div style="position:absolute;left:0;right:0;top:179px;height:1px;background:#f8e8c0"></div><div style="position:absolute;left:0;right:0;top:199px;height:1px;background:#f8e8c0"></div><div style="position:absolute;left:0;right:0;top:219px;height:1px;background:#f8e8c0"></div><div style="position:absolute;left:0;right:0;top:239px;height:1px;background:#f8e8c0"></div><div style="position:absolute;left:0;right:0;top:259px;height:1px;background:#f8e8c0"></div><div style="position:absolute;left:0;right:0;top:279px;height:1px;background:#f8e8c0"></div><div style="position:absolute;left:0;right:0;top:299px;height:1px;background:#f8e8c0"></div><div style="position:absolute;left:0;right:0;top:319px;height:1px;background:#f8e8c0"></div><div style="position:absolute;left:0;right:0;top:339px;height:1px;background:#f8e8c0"></div><div style="position:absolute;left:0;right:0;top:359px;height:1px;background:#f8e8c0"></div></div>
<div class="t" style="left:816px;width:175px;text-align:center;top:268px;font-size:14px;font-weight:bold;color:#000">Christine</div>
<div class="a" style="left:998px;top:284px;width:168px;height:380px;background:#fdfde4;overflow:hidden"><div style="position:absolute;left:0;right:0;top:0;height:359px;background:#efa014"></div><div style="position:absolute;left:0;right:0;top:19px;height:1px;background:#f8e8c0"></div><div style="position:absolute;left:0;right:0;top:39px;height:1px;background:#f8e8c0"></div><div style="position:absolute;left:0;right:0;top:59px;height:1px;background:#f8e8c0"></div><div style="position:absolute;left:0;right:0;top:79px;height:1px;background:#f8e8c0"></div><div style="position:absolute;left:0;right:0;top:99px;height:1px;background:#f8e8c0"></div><div style="position:absolute;left:0;right:0;top:119px;height:1px;background:#f8e8c0"></div><div style="position:absolute;left:0;right:0;top:139px;height:1px;background:#f8e8c0"></div><div style="position:absolute;left:0;right:0;top:159px;height:1px;background:#f8e8c0"></div><div style="position:absolute;left:0;right:0;top:179px;height:1px;background:#f8e8c0"></div><div style="position:absolute;left:0;right:0;top:199px;height:1px;background:#f8e8c0"></div><div style="position:absolute;left:0;right:0;top:219px;height:1px;background:#f8e8c0"></div><div style="position:absolute;left:0;right:0;top:239px;height:1px;background:#f8e8c0"></div><div style="position:absolute;left:0;right:0;top:259px;height:1px;background:#f8e8c0"></div><div style="position:absolute;left:0;right:0;top:279px;height:1px;background:#f8e8c0"></div><div style="position:absolute;left:0;right:0;top:299px;height:1px;background:#f8e8c0"></div><div style="position:absolute;left:0;right:0;top:319px;height:1px;background:#f8e8c0"></div><div style="position:absolute;left:0;right:0;top:339px;height:1px;background:#f8e8c0"></div><div style="position:absolute;left:0;right:0;top:359px;height:1px;background:#f8e8c0"></div></div>
<div class="t" style="left:991px;width:175px;text-align:center;top:268px;font-size:14px;font-weight:bold;color:#000">App 2</div>
<div class="a" style="left:1173px;top:284px;width:169px;height:380px;background:#fdfde4;overflow:hidden"><div style="position:absolute;left:0;right:0;top:0;height:359px;background:#efa014"></div><div style="position:absolute;left:0;right:0;top:19px;height:1px;background:#f8e8c0"></div><div style="position:absolute;left:0;right:0;top:39px;height:1px;background:#f8e8c0"></div><div style="position:absolute;left:0;right:0;top:59px;height:1px;background:#f8e8c0"></div><div style="position:absolute;left:0;right:0;top:79px;height:1px;background:#f8e8c0"></div><div style="position:absolute;left:0;right:0;top:99px;height:1px;background:#f8e8c0"></div><div style="position:absolute;left:0;right:0;top:119px;height:1px;background:#f8e8c0"></div><div style="position:absolute;left:0;right:0;top:139px;height:1px;background:#f8e8c0"></div><div style="position:absolute;left:0;right:0;top:159px;height:1px;background:#f8e8c0"></div><div style="position:absolute;left:0;right:0;top:179px;height:1px;background:#f8e8c0"></div><div style="position:absolute;left:0;right:0;top:199px;height:1px;background:#f8e8c0"></div><div style="position:absolute;left:0;right:0;top:219px;height:1px;background:#f8e8c0"></div><div style="position:absolute;left:0;right:0;top:239px;height:1px;background:#f8e8c0"></div><div style="position:absolute;left:0;right:0;top:259px;height:1px;background:#f8e8c0"></div><div style="position:absolute;left:0;right:0;top:279px;height:1px;background:#f8e8c0"></div><div style="position:absolute;left:0;right:0;top:299px;height:1px;background:#f8e8c0"></div><div style="position:absolute;left:0;right:0;top:319px;height:1px;background:#f8e8c0"></div><div style="position:absolute;left:0;right:0;top:339px;height:1px;background:#f8e8c0"></div><div style="position:absolute;left:0;right:0;top:359px;height:1px;background:#f8e8c0"></div></div>
<div class="t" style="left:1166px;width:176px;text-align:center;top:268px;font-size:14px;font-weight:bold;color:#000">Ramona</div>
<div class="a" style="left:465px;top:284px;width:1px;height:380px;background:#000"></div><div class="a" style="left:471px;top:284px;width:1px;height:380px;background:#000"></div><div class="a" style="left:464px;top:267px;width:1px;height:17px;background:#a0a0a0"></div><div class="a" style="left:465px;top:267px;width:1px;height:17px;background:#fff"></div>
<div class="a" style="left:640px;top:284px;width:1px;height:380px;background:#000"></div><div class="a" style="left:646px;top:284px;width:1px;height:380px;background:#000"></div><div class="a" style="left:639px;top:267px;width:1px;height:17px;background:#a0a0a0"></div><div class="a" style="left:640px;top:267px;width:1px;height:17px;background:#fff"></div>
<div class="a" style="left:816px;top:284px;width:1px;height:380px;background:#000"></div><div class="a" style="left:822px;top:284px;width:1px;height:380px;background:#000"></div><div class="a" style="left:815px;top:267px;width:1px;height:17px;background:#a0a0a0"></div><div class="a" style="left:816px;top:267px;width:1px;height:17px;background:#fff"></div>
<div class="a" style="left:991px;top:284px;width:1px;height:380px;background:#000"></div><div class="a" style="left:997px;top:284px;width:1px;height:380px;background:#000"></div><div class="a" style="left:990px;top:267px;width:1px;height:17px;background:#a0a0a0"></div><div class="a" style="left:991px;top:267px;width:1px;height:17px;background:#fff"></div>
<div class="a" style="left:1166px;top:284px;width:1px;height:380px;background:#000"></div><div class="a" style="left:1172px;top:284px;width:1px;height:380px;background:#000"></div><div class="a" style="left:1165px;top:267px;width:1px;height:17px;background:#a0a0a0"></div><div class="a" style="left:1166px;top:267px;width:1px;height:17px;background:#fff"></div>
<div class="a" style="left:296px;top:284px;width:1px;height:380px;background:#000"></div>
<div class="a" style="left:247px;top:283px;width:39px;height:1px;background:#8a9aaa"></div><div class="a" style="left:269px;top:303px;width:17px;height:1px;background:#8a9aaa"></div><div class="t" style="left:255px;top:288px;font-size:11px;color:#ffffff">13:30</div>
<div class="a" style="left:247px;top:323px;width:39px;height:1px;background:#8a9aaa"></div><div class="a" style="left:269px;top:343px;width:17px;height:1px;background:#8a9aaa"></div><div class="t" style="left:255px;top:328px;font-size:11px;color:#ffffff">14:00</div>
<div class="a" style="left:247px;top:363px;width:39px;height:1px;background:#8a9aaa"></div><div class="a" style="left:269px;top:383px;width:17px;height:1px;background:#8a9aaa"></div><div class="t" style="left:255px;top:368px;font-size:11px;color:#ffffff">14:30</div>
<div class="a" style="left:247px;top:403px;width:39px;height:1px;background:#8a9aaa"></div><div class="a" style="left:269px;top:423px;width:17px;height:1px;background:#8a9aaa"></div><div class="t" style="left:255px;top:408px;font-size:11px;color:#ffffff">15:00</div>
<div class="a" style="left:247px;top:443px;width:39px;height:1px;background:#8a9aaa"></div><div class="a" style="left:269px;top:463px;width:17px;height:1px;background:#8a9aaa"></div><div class="t" style="left:255px;top:448px;font-size:11px;color:#ffffff">15:30</div>
<div class="a" style="left:247px;top:483px;width:39px;height:1px;background:#8a9aaa"></div><div class="a" style="left:269px;top:503px;width:17px;height:1px;background:#8a9aaa"></div><div class="t" style="left:255px;top:488px;font-size:11px;color:#ffffff">16:00</div>
<div class="a" style="left:247px;top:523px;width:39px;height:1px;background:#8a9aaa"></div><div class="a" style="left:269px;top:543px;width:17px;height:1px;background:#8a9aaa"></div><div class="t" style="left:255px;top:528px;font-size:11px;color:#ffffff">16:30</div>
<div class="a" style="left:247px;top:563px;width:39px;height:1px;background:#8a9aaa"></div><div class="a" style="left:269px;top:583px;width:17px;height:1px;background:#8a9aaa"></div><div class="t" style="left:255px;top:568px;font-size:11px;color:#ffffff">17:00</div>
<div class="a" style="left:247px;top:603px;width:39px;height:1px;background:#8a9aaa"></div><div class="a" style="left:269px;top:623px;width:17px;height:1px;background:#8a9aaa"></div><div class="t" style="left:255px;top:608px;font-size:11px;color:#ffffff">17:30</div>
<div class="a" style="left:247px;top:643px;width:39px;height:1px;background:#8a9aaa"></div><div class="a" style="left:269px;top:663px;width:17px;height:1px;background:#8a9aaa"></div><div class="t" style="left:255px;top:648px;font-size:11px;color:#ffffff">18:00</div>

<div class="a" style="left:247px;top:456px;width:43px;height:10px;background:linear-gradient(#fff2dc,#f9d088 50%,#fca822)"></div><div class="a" style="left:247px;top:466px;width:43px;height:1px;background:#2a62d0"></div><div class="a" style="left:269px;top:463px;width:17px;height:1px;background:#9a9aa0"></div>
<svg class="a" style="left:270px;top:283px" width="21" height="9" viewBox="0 0 21 9">
<rect x="0.5" y="0.5" width="20" height="7.5" fill="#fdfbe0" stroke="#000" stroke-width="1"/>
<path d="M3 6.5 L6.5 2.5 L10 6.5 Z" fill="#000"/>
<rect x="11" y="4.5" width="2" height="2" fill="#000"/><rect x="14" y="4.5" width="2" height="2" fill="#000"/><rect x="17" y="4.5" width="2" height="2" fill="#000"/>
</svg>
<!-- v scrollbar -->
<div class="a" style="left:1342px;top:231px;width:17px;height:433px;background:linear-gradient(90deg,#c4d6e4,#f4f8fc 55%,#d0dee8)"></div>
<div class="a" style="left:1342px;top:232px;width:16px;height:16px;background:linear-gradient(135deg,#f4f8fc,#d4e0ea);border:1px solid;border-color:#fff #303840 #303840 #fff"></div>
<div class="a" style="left:1346px;top:237px;width:0;height:0;border-left:4px solid transparent;border-right:4px solid transparent;border-bottom:4px solid #000"></div>
<div class="a" style="left:1342px;top:473px;width:17px;height:78px;background:linear-gradient(#c4d6e4,#f4f8fc 50%,#c4d6e4);border:1px solid;border-color:#fff #505860 #505860 #fff"></div>
<div class="a" style="left:1342px;top:648px;width:16px;height:15px;background:linear-gradient(135deg,#f4f8fc,#d4e0ea);border:1px solid;border-color:#fff #303840 #303840 #fff"></div>
<div class="a" style="left:1346px;top:653px;width:0;height:0;border-left:4px solid transparent;border-right:4px solid transparent;border-top:4px solid #000"></div>
<div class="a" style="left:1359px;top:231px;width:2px;height:452px;background:#1a1a1a"></div>
<!-- h scrollbar -->
<div class="a" style="left:290px;top:664px;width:1052px;height:17px;background:linear-gradient(90deg,#d8e4ee,#c4d6e4)"></div>
<div class="a" style="left:290px;top:664px;width:16px;height:16px;background:linear-gradient(135deg,#f4f8fc,#d4e0ea);border:1px solid;border-color:#fff #303840 #303840 #fff"></div>
<div class="a" style="left:295px;top:668px;width:0;height:0;border-top:4px solid transparent;border-bottom:4px solid transparent;border-right:4px solid #000"></div>
<div class="a" style="left:306px;top:664px;width:874px;height:16px;background:linear-gradient(#d4e0ea,#eef3f8 45%,#c8d6e2);border:1px solid;border-color:#fff #505860 #505860 #fff"></div>
<div class="a" style="left:1326px;top:664px;width:16px;height:16px;background:linear-gradient(135deg,#f4f8fc,#d4e0ea);border:1px solid;border-color:#fff #303840 #303840 #fff"></div>
<div class="a" style="left:1332px;top:668px;width:0;height:0;border-top:4px solid transparent;border-bottom:4px solid transparent;border-left:4px solid #000"></div>
<div class="a" style="left:1342px;top:664px;width:17px;height:17px;background:#9db5c9"></div>
<div class="a" style="left:240px;top:681px;width:1120px;height:2px;background:#1a1a1a"></div>
<!-- doc close X -->
<svg class="a" style="left:1351px;top:160px" width="10" height="9" viewBox="0 0 10 9"><path d="M1 0.5 L9 8.5 M9 0.5 L1 8.5" stroke="#15307a" stroke-width="2"/></svg>
<div class="a" style="left:1364px;top:153px;width:2px;height:533px;background:#a0a0a0"></div>

<!-- status -->
<div class="a" style="left:0;top:684px;width:1366px;height:2px;background:#eef0f4"></div>
<div class="a" style="left:0;top:686px;width:1366px;height:1px;background:#7a7a7a"></div>
<div class="a" style="left:0;top:687px;width:1366px;height:1px;background:#a4a4a4"></div>
<div class="a" style="left:0;top:688px;width:1366px;height:1px;background:#5a80b8"></div>
<div class="a" style="left:0;top:689px;width:1366px;height:37px;background:linear-gradient(#e4eefb 0px,#c6dcf5 12px,#b4d0f3 15px,#bcd5f4 22px,#d4e4fa 37px)"></div><div class="a" style="left:1014px;top:689px;width:341px;height:12px;background:#c9ddf3"></div>
<div class="a" style="left:0;top:691px;width:100px;height:35px;background:#f0f0f0;border:1px solid #9cc8ff;border-left:none;border-bottom:none"></div>
<svg class="a" style="left:3px;top:705px" width="11" height="10" viewBox="0 0 11 10"><path d="M0 3.5 L4 3 Q6 2 8 1 L10 0.5 L10 2 Q8 3 7 4 L6 6 L7 8 L5.5 9 L5 6 Q3 5 0 4.5 Z" fill="#f0a020"/></svg>
<div class="t" style="left:19px;top:704px;font-size:11px;color:#222">Agenda</div>
<div class="t" style="left:1271px;top:690px;font-size:11px;font-weight:bold;color:#1e2e58">AniSano GmbH</div>

</body></html>
